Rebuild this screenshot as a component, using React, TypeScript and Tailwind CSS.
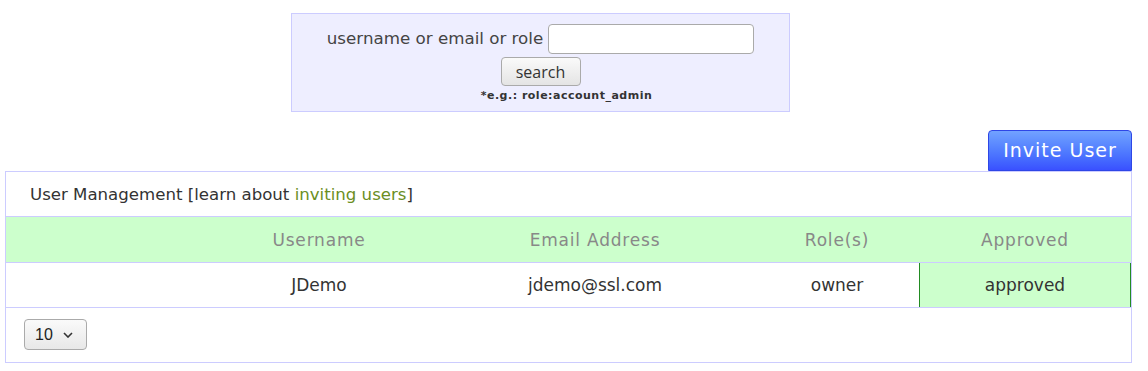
import React from "react";

export default function App() {
  const mont = { fontFamily: '"DejaVu Sans", sans-serif' };
  return (
    <div className="w-[1148px] h-[371px] bg-white text-[#333]" style={mont}>
      <div className="pt-[13px] pl-[291px]">
        <div className="w-[499px] h-[99px] bg-[#eeeeff] border border-[#ccccff] flex flex-col items-center pt-[10px]">
          <div className="flex items-center gap-[5px]">
            <span className="text-[16.7px] text-[#444]">username or email or role</span>
            <input className="w-[206px] h-[30px] rounded-[4px] border border-[#aaa] bg-white" />
          </div>
          <button className="mt-[3px] w-[80px] h-[29px] rounded-[4px] border border-[#aaa] bg-gradient-to-b from-[#fafafa] to-[#e4e4e4] text-[16px] text-[#333]" style={{ fontFamily: '"Open Sans", sans-serif' }}>search</button>
          <div className="mt-[2px] pl-[52px] text-[11px] font-bold tracking-[0.5px] text-[#333]">*e.g.: role:account_admin</div>
        </div>
      </div>
      <div className="mt-[18px] flex justify-end pr-[16px]">
        <button className="w-[144px] h-[41px] rounded-t-[4px] border border-[#2e46e6] bg-gradient-to-b from-[#72a2ff] to-[#3a50ff] text-white text-[19px] tracking-[1px]">Invite User</button>
      </div>
      <div className="ml-[5px] w-[1127px] border border-[#ccccff]">
        <div className="h-[45px] flex items-center pl-[24px] pt-[2px] text-[16.6px] text-[#333] border-b border-[#ccccff]">
          User Management [learn about&nbsp;<span className="text-[#6b8e23]">inviting users</span>]
        </div>
        <div className="h-[46px] flex pt-[2px] bg-[#ccffcc] text-[#888] text-[17px] tracking-[0.8px] border-b border-[#ccccff]">
          <div className="w-[197px]" />
          <div className="w-[232px] flex items-center justify-center">Username</div>
          <div className="w-[320px] flex items-center justify-center">Email Address</div>
          <div className="w-[164px] flex items-center justify-center">Role(s)</div>
          <div className="flex-1 flex items-center justify-center">Approved</div>
        </div>
        <div className="h-[45px] flex text-[17px] text-[#333] border-b border-[#ccccff]">
          <div className="w-[197px]" />
          <div className="w-[232px] flex items-center justify-center pt-[2px]">JDemo</div>
          <div className="w-[320px] flex items-center justify-center pt-[2px]">jdemo@ssl.com</div>
          <div className="w-[164px] flex items-center justify-center pt-[2px]">owner</div>
          <div className="flex-1 flex items-center justify-center pt-[2px] bg-[#ccffcc] border-l border-r border-[#228b22]">approved</div>
        </div>
        <div className="h-[54px] flex items-start pt-[11px] pl-[18px]">
          <div className="w-[63px] h-[31px] rounded-[4px] border border-[#aaa] bg-gradient-to-b from-[#fafafa] to-[#e8e8e8] flex items-center pl-[10px] gap-[10px] text-[16px] text-[#222]" style={{ fontFamily: '"Liberation Sans", sans-serif' }}>
            <span>10</span>
            <svg width="10" height="6" viewBox="0 0 10 6"><path d="M1 1l4 4 4-4" fill="none" stroke="#333" strokeWidth="1.6" /></svg>
          </div>
        </div>
      </div>
    </div>
  );
}
